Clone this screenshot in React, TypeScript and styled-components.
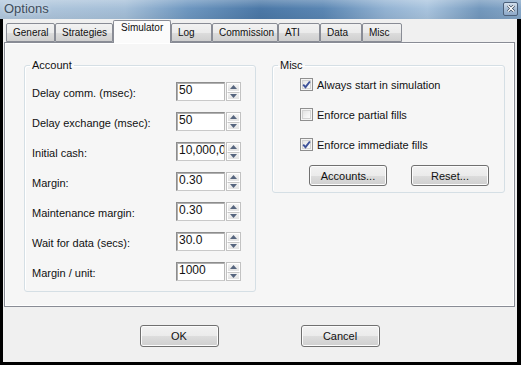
import React from "react";
import styled, { createGlobalStyle } from "styled-components";

const GlobalStyle = createGlobalStyle`
  html, body {
    margin: 0;
    padding: 0;
    background: #000;
  }
  body {
    font-family: "Liberation Sans", Arial, sans-serif;
    font-size: 11px;
    color: #111;
  }
`;

const Window = styled.div`
  width: 521px;
  height: 365px;
  background: #000;
  display: flex;
  flex-direction: column;
  overflow: hidden;
`;

const TitleBar = styled.div`
  height: 19px;
  flex: 0 0 19px;
  display: flex;
  align-items: center;
  justify-content: space-between;
  padding: 0 3px 0 4px;
  box-sizing: border-box;
  background:
    linear-gradient(180deg, rgba(255, 255, 255, 0.25) 0%, rgba(255, 255, 255, 0) 45%, rgba(0, 0, 0, 0.05) 100%),
    linear-gradient(
      90deg,
      #b2c8dd 0%,
      #a5bfd8 24%,
      #6e97c0 36%,
      #4b78a7 50%,
      #5a86b3 62%,
      #93b3d3 74%,
      #a9c4de 82%,
      #7398bd 92%,
      #86a7c8 100%
    );
`;

const Title = styled.span`
  font-size: 13px;
  line-height: 15px;
  color: #3e4c5b;
  text-shadow: 0 0 4px rgba(255, 255, 255, 0.7);
  margin-top: -2px;
`;

const CloseButton = styled.div`
  width: 15px;
  height: 14px;
  box-sizing: border-box;
  border: 1px solid #4c6079;
  border-radius: 2px;
  background: linear-gradient(180deg, #d4e0ec 0%, #a8bfd7 50%, #8ea9c8 100%);
  display: flex;
  align-items: center;
  justify-content: center;
  margin-top: -2px;
`;

const Body = styled.div`
  flex: 1;
  margin: 0 4px 3px 3px;
  background: #f0f0f0;
  display: flex;
  flex-direction: column;
`;

const TabStrip = styled.div`
  height: 23px;
  flex: 0 0 23px;
  display: flex;
  align-items: flex-end;
  padding-left: 3px;
  position: relative;
  z-index: 1;
`;

const Tab = styled.div<{ $w: number; $active?: boolean }>`
  width: ${({ $w }) => $w}px;
  height: ${({ $active }) => ($active ? 23 : 19)}px;
  margin-bottom: ${({ $active }) => ($active ? -1 : 0)}px;
  box-sizing: border-box;
  border: 1px solid #898c95;
  border-bottom: ${({ $active }) => ($active ? "none" : "1px solid #898c95")};
  border-radius: 2px 2px 0 0;
  background: ${({ $active }) =>
    $active ? "#fbfbfb" : "linear-gradient(180deg, #f2f2f2 0%, #ebebeb 50%, #dddddd 51%, #cfcfcf 100%)"};
  padding: ${({ $active }) => ($active ? "0 0 0 7px" : "2px 0 0 6px")};
  font-size: 10px;
  line-height: 13px;
  white-space: nowrap;
`;

const Panel = styled.div`
  height: 265px;
  flex: 0 0 265px;
  margin: 0 2px 0 1px;
  box-sizing: border-box;
  border: 1px solid #898c95;
  box-shadow: inset 1px 1px 0 #ffffff, inset -1px -1px 0 #ffffff;
  background: #f6f6f6;
  display: flex;
  align-items: flex-start;
  gap: 16px;
  padding: 16px 0 0 19px;
`;

const GroupBox = styled.fieldset<{ $w: number; $h: number }>`
  width: ${({ $w }) => $w}px;
  height: ${({ $h }) => $h}px;
  box-sizing: border-box;
  margin: 0;
  padding: 0;
  border: 1px solid #d5dfe5;
  border-radius: 3px;
  box-shadow: inset 1px 1px 0 #ffffff;
  min-width: 0;
`;

const Caption = styled.legend`
  margin-left: 5px;
  padding: 0 2px;
  font-size: 11px;
  line-height: 13px;
`;

const AccountBody = styled.div`
  display: flex;
  flex-direction: column;
  gap: 11px;
  padding: 10px 0 0 7px;
`;

const Row = styled.div`
  display: flex;
  height: 19px;
`;

const FieldLabel = styled.div`
  width: 144px;
  padding-top: 5px;
  line-height: 13px;
  font-size: 11px;
  white-space: nowrap;
`;

const TextBox = styled.div`
  width: 49px;
  height: 19px;
  box-sizing: border-box;
  border: 1px solid #8d8d8d;
  border-right-color: #b9b9b9;
  border-bottom-color: #c9c9c9;
  box-shadow: inset 1px 1px 0 #b0b0b0;
  background: #fff;
  padding: 1px 0 0 2px;
  font-size: 12px;
  line-height: 13px;
  white-space: nowrap;
  overflow: hidden;
`;

const Spin = styled.div`
  width: 15px;
  height: 19px;
  margin-left: 1px;
  box-sizing: border-box;
  border: 1px solid #c2c2c2;
  display: flex;
  flex-direction: column;
  background: #fff;
`;

const SpinHalf = styled.div`
  flex: 1;
  display: flex;
  align-items: center;
  justify-content: center;
  background: linear-gradient(180deg, #f4f4f4 0%, #e2e2e2 100%);
  border: 1px solid #ffffff;
  & + & {
    border-top: 1px solid #c8c8c8;
  }
`;

const MiscBody = styled.div`
  display: flex;
  flex-direction: column;
  padding-top: 6px;
`;

const CheckList = styled.div`
  display: flex;
  flex-direction: column;
  gap: 17px;
  padding-left: 27px;
`;

const CheckRow = styled.div`
  display: flex;
  align-items: center;
  gap: 4px;
  height: 13px;
  font-size: 11px;
  white-space: nowrap;
`;

const CheckBox = styled.div`
  width: 13px;
  height: 13px;
  box-sizing: border-box;
  border: 1px solid #8f8f8f;
  background: linear-gradient(135deg, #dcdcdc 0%, #f4f4f4 60%, #ffffff 100%);
  box-shadow: inset 0 0 0 1px #f4f4f4, inset 0 0 0 2px #d2d2d2;
  display: flex;
  align-items: center;
  justify-content: center;
`;

const ButtonRow = styled.div<{ $gap: number }>`
  display: flex;
  gap: ${({ $gap }) => $gap}px;
`;

const MiscButtons = styled(ButtonRow)`
  padding: 14px 0 0 36px;
`;

const DialogButtons = styled(ButtonRow)`
  justify-content: center;
  padding-top: 18px;
  padding-right: 1px;
`;

const Button = styled.div<{ $w: number; $h: number }>`
  width: ${({ $w }) => $w}px;
  height: ${({ $h }) => $h}px;
  box-sizing: border-box;
  border: 1px solid #707070;
  border-radius: 3px;
  background: linear-gradient(180deg, #f2f2f2 0%, #ebebeb 50%, #dddddd 51%, #cfcfcf 100%);
  box-shadow: inset 0 0 0 1px #fcfcfc;
  display: flex;
  align-items: center;
  justify-content: center;
  font-size: 11px;
`;

const Arrow = ({ up }: { up?: boolean }) => (
  <svg width="7" height="4" viewBox="0 0 7 4">
    <path d={up ? "M0 4 L3.5 0 L7 4 Z" : "M0 0 L3.5 4 L7 0 Z"} fill="#56657e" />
  </svg>
);

const Check = () => (
  <svg width="9" height="9" viewBox="0 0 9 9">
    <path d="M1.2 4.6 L3.5 7.2 L7.9 1.5" fill="none" stroke="#3e529a" strokeWidth="1.9" />
  </svg>
);

const tabs: [string, number][] = [
  ["General", 49],
  ["Strategies", 58],
  ["Simulator", 58],
  ["Log", 41],
  ["Commission", 66],
  ["ATI", 42],
  ["Data", 42],
  ["Misc", 40],
];

const fields: [string, string][] = [
  ["Delay comm. (msec):", "50"],
  ["Delay exchange (msec):", "50"],
  ["Initial cash:", "10,000,000"],
  ["Margin:", "0.30"],
  ["Maintenance margin:", "0.30"],
  ["Wait for data (secs):", "30.0"],
  ["Margin / unit:", "1000"],
];

const checks: [string, boolean][] = [
  ["Always start in simulation", true],
  ["Enforce partial fills", false],
  ["Enforce immediate fills", true],
];

const App: React.FC = () => (
  <>
    <GlobalStyle />
    <Window>
      <TitleBar>
        <Title>Options</Title>
        <CloseButton>
          <svg width="8" height="7" viewBox="0 0 8 7">
            <path d="M1 0.5 L7 6.5 M7 0.5 L1 6.5" stroke="#2d3b4d" strokeWidth="2.6" />
            <path d="M1 0.5 L7 6.5 M7 0.5 L1 6.5" stroke="#ffffff" strokeWidth="1.4" />
          </svg>
        </CloseButton>
      </TitleBar>
      <Body>
        <TabStrip>
          {tabs.map(([name, w]) => (
            <Tab key={name} $w={w} $active={name === "Simulator"}>
              {name}
            </Tab>
          ))}
        </TabStrip>
        <Panel>
          <GroupBox $w={232} $h={233}>
            <Caption>Account</Caption>
            <AccountBody>
              {fields.map(([label, value]) => (
                <Row key={label}>
                  <FieldLabel>{label}</FieldLabel>
                  <TextBox>{value}</TextBox>
                  <Spin>
                    <SpinHalf>
                      <Arrow up />
                    </SpinHalf>
                    <SpinHalf>
                      <Arrow />
                    </SpinHalf>
                  </Spin>
                </Row>
              ))}
            </AccountBody>
          </GroupBox>
          <GroupBox $w={233} $h={134}>
            <Caption>Misc</Caption>
            <MiscBody>
              <CheckList>
                {checks.map(([label, on]) => (
                  <CheckRow key={label}>
                    <CheckBox>{on && <Check />}</CheckBox>
                    {label}
                  </CheckRow>
                ))}
              </CheckList>
              <MiscButtons $gap={24}>
                <Button $w={78} $h={21}>Accounts...</Button>
                <Button $w={78} $h={21}>Reset...</Button>
              </MiscButtons>
            </MiscBody>
          </GroupBox>
        </Panel>
        <DialogButtons $gap={82}>
          <Button $w={79} $h={22}>OK</Button>
          <Button $w={79} $h={22}>Cancel</Button>
        </DialogButtons>
      </Body>
    </Window>
  </>
);

export default App;
